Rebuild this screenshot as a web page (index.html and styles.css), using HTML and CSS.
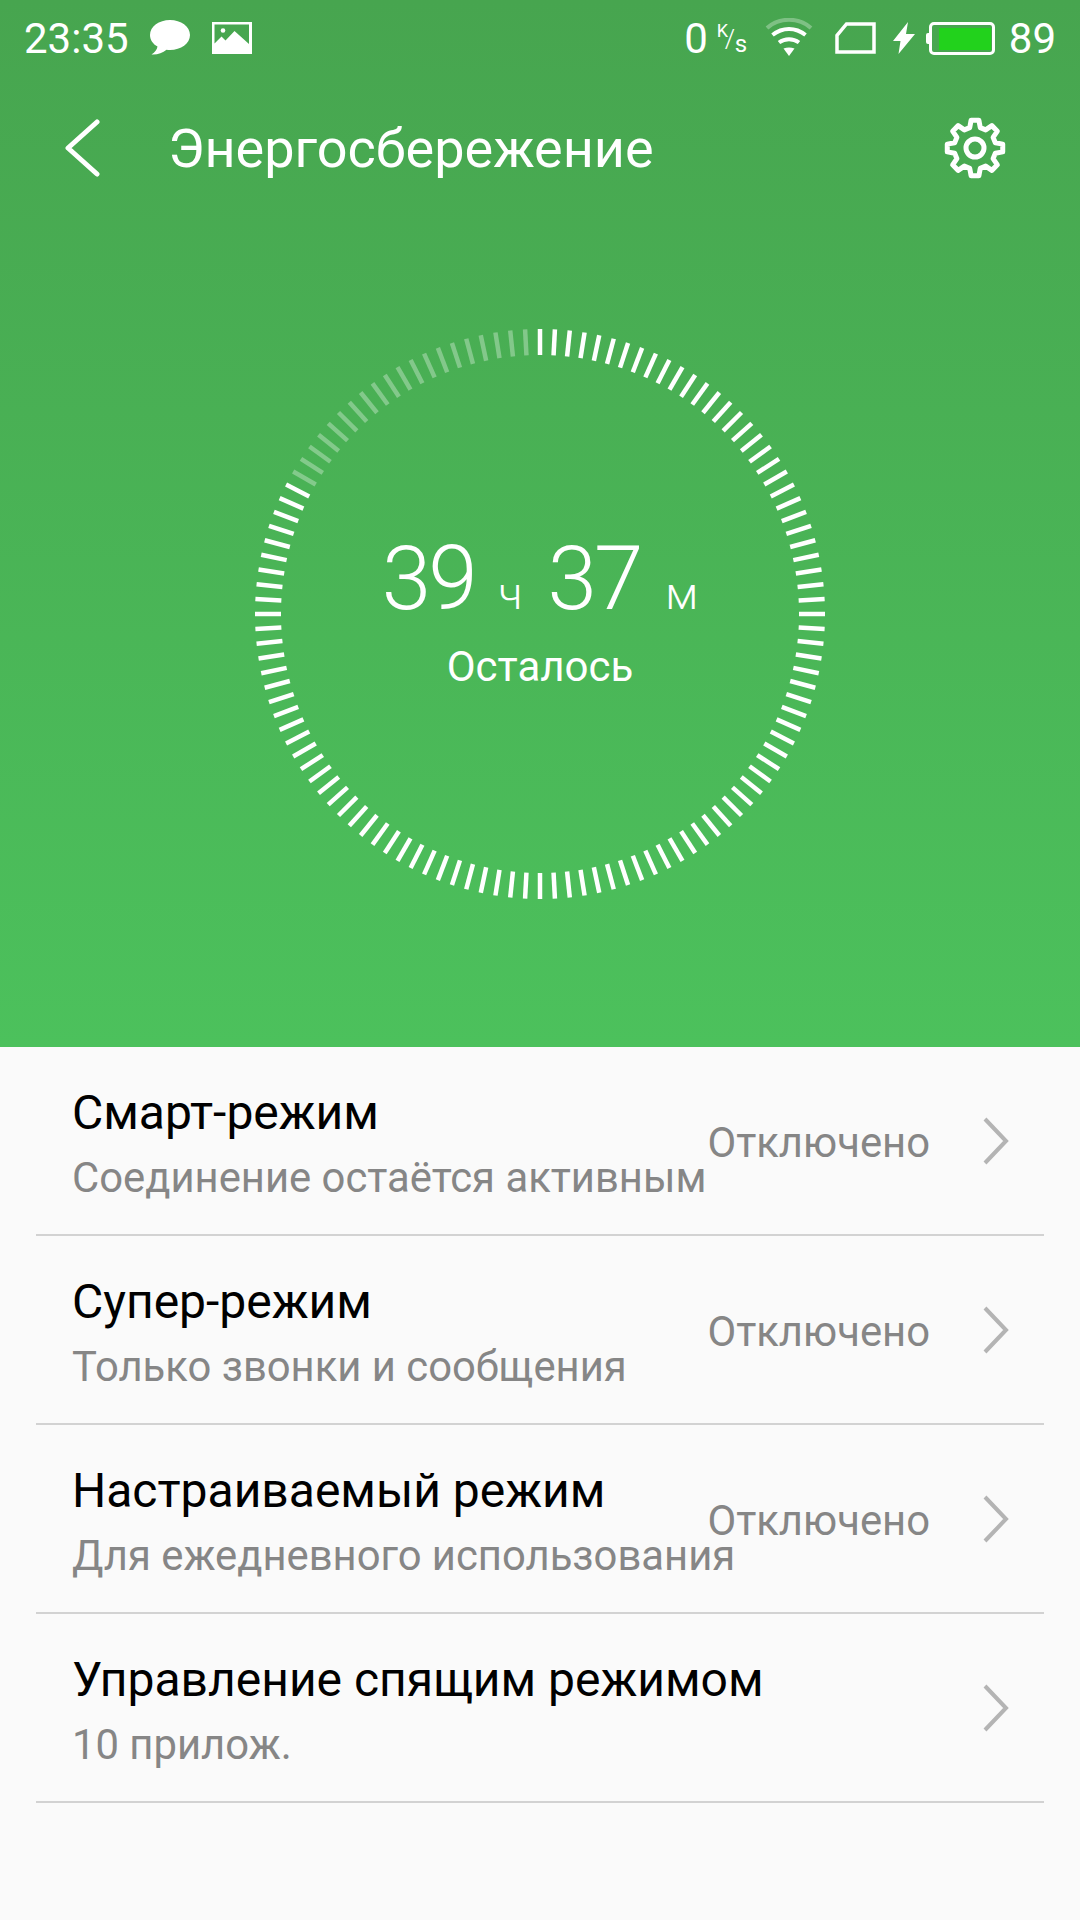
FILE: index.html
```html
<!DOCTYPE html>
<html lang="ru">
<head>
    <meta charset="UTF-8">
    <meta name="viewport" content="width=device-width, initial-scale=1.0">
    <title>Энергосбережение</title>
    <link rel="stylesheet" href="styles.css">
</head>
<body>

<div class="hero">
    <div class="status-bar">
        <span class="status-time">23:35</span>
        <svg class="icon-message" width="40" height="36" viewBox="0 0 40 36">
            <path fill="#fff" d="M20 0C9 0 0 6.500 0 15c0 5 3 9 7.500 11.600C7 29.500 5 32.500 1.500 34.500c5 .5 11-1 15-4.700 1 .1 2.400.2 3.500.2 11 0 20-6.500 20-15S31 0 20 0z"/>
        </svg>
        <svg class="icon-picture" width="40" height="32" viewBox="0 0 40 32">
            <path fill="#fff" fill-rule="evenodd" d="M0 0h40v32H0zM2.500 2.500v19l7-7 4 4 9-9.500 14.500 13V2.500z"/>
            <circle cx="11" cy="8.500" r="2.300" fill="#fff"/>
        </svg>

        <div class="status-right">
            <span class="status-speed">0</span>
            <span class="status-unit"><span class="unit-k">K</span><span class="unit-slash">/</span><span class="unit-s">s</span></span>
            <svg class="icon-wifi" width="48" height="40" viewBox="0 0 48 40">
                <path fill="none" stroke="#fff" stroke-opacity=".3" stroke-width="4" d="M2 10C14-1 34-1 46 10"/>
                <path fill="none" stroke="#fff" stroke-width="4" d="M7.500 17c10-8 23-8 33 0M14 24.500c6-4.500 14-4.500 20 0"/>
                <path fill="#fff" d="M18.500 30.500c3.500-1.500 7.500-1.500 11 0L24 38z"/>
            </svg>
            <svg class="icon-sim" width="41" height="32" viewBox="0 0 41 32">
                <path fill="none" stroke="#fff" stroke-width="3.500" d="M39 2v28H2V13.500L11.500 2z"/>
            </svg>
            <svg class="icon-bolt" width="23" height="32" viewBox="0 0 23 32">
                <path fill="#fff" d="M15 0L0 19h7.500L5.500 32 22 12h-9z"/>
            </svg>
            <div class="battery">
                <div class="battery-level"></div>
            </div>
            <span class="status-percent">89</span>
        </div>
    </div>

    <div class="toolbar">
        <svg class="icon-back" width="36" height="60" viewBox="0 0 36 60">
            <path fill="none" stroke="#fff" stroke-width="5" stroke-linecap="round" stroke-linejoin="round" d="M32 4L3 30l29 26"/>
        </svg>
        <span class="toolbar-title">Энергосбережение</span>
        <svg class="icon-gear" width="64" height="64" viewBox="-32 -32 64 64">
            <path fill="none" stroke="#fff" stroke-width="5" stroke-linejoin="round" d="M-5.260-20.330L-3.900-27.730 3.900-27.730 5.260-20.330 10.660-18.090 16.850-22.360 22.360-16.850 18.090-10.660 20.330-5.260 27.730-3.900 27.730 3.900 20.330 5.260 18.090 10.660 22.360 16.850 16.850 22.360 10.660 18.090 5.260 20.330 3.900 27.730-3.900 27.730-5.260 20.330-10.660 18.090-16.850 22.360-22.360 16.850-18.090 10.660-20.330 5.260-27.730 3.900-27.730-3.900-20.330-5.260-18.090-10.660-22.360-16.850-16.850-22.360-10.660-18.090z"/>
            <circle r="9" fill="none" stroke="#fff" stroke-width="5"/>
        </svg>
    </div>

    <div class="gauge">
        <svg id="gauge_ticks" width="580" height="580" viewBox="-290 -290 580 580"></svg>
        <div class="gauge-text">
            <div class="gauge-time">
                <span class="gauge-num">39</span><span class="gauge-unit unit-hours">ч</span><span class="gauge-num">37</span><span class="gauge-unit unit-mins">м</span>
            </div>
            <div class="gauge-label">Осталось</div>
        </div>
    </div>
</div>

<div class="list">
    <div class="row">
        <div class="row-text">
            <div class="row-title">Смарт-режим</div>
            <div class="row-sub">Соединение остаётся активным</div>
        </div>
        <span class="row-value">Отключено</span>
        <svg class="chevron" width="28" height="48" viewBox="0 0 28 48"><path d="M3 2l21 22L3 46"/></svg>
    </div>
    <div class="row">
        <div class="row-text">
            <div class="row-title">Супер-режим</div>
            <div class="row-sub">Только звонки и сообщения</div>
        </div>
        <span class="row-value">Отключено</span>
        <svg class="chevron" width="28" height="48" viewBox="0 0 28 48"><path d="M3 2l21 22L3 46"/></svg>
    </div>
    <div class="row">
        <div class="row-text">
            <div class="row-title">Настраиваемый режим</div>
            <div class="row-sub">Для ежедневного использования</div>
        </div>
        <span class="row-value">Отключено</span>
        <svg class="chevron" width="28" height="48" viewBox="0 0 28 48"><path d="M3 2l21 22L3 46"/></svg>
    </div>
    <div class="row">
        <div class="row-text">
            <div class="row-title">Управление спящим режимом</div>
            <div class="row-sub">10 прилож.</div>
        </div>
        <svg class="chevron" width="28" height="48" viewBox="0 0 28 48"><path d="M3 2l21 22L3 46"/></svg>
    </div>
</div>

<script>
    // 120 ticks round the dial, the 20 just before 12 o'clock are dimmed
    function drawTicks() {
        const svg = document.getElementById('gauge_ticks');
        for (let i = 0; i < 120; i++) {
            const line = document.createElementNS('http://www.w3.org/2000/svg', 'line');
            line.setAttribute('x1', 0);
            line.setAttribute('x2', 0);
            line.setAttribute('y1', -259);
            line.setAttribute('y2', -285);
            line.setAttribute('transform', 'rotate(' + (i * 3) + ')');
            line.setAttribute('class', i >= 100 ? 'tick tick-dim' : 'tick');
            svg.appendChild(line);
        }
    }

    drawTicks();
</script>

</body>
</html>
```
FILE: styles.css
```css
html, body {
    margin: 0;
    padding: 0;
}

body {
    width: 1080px;
    height: 1920px;
    overflow: hidden;
    background-color: #fafafa;
    font-family: Roboto, sans-serif;
}

svg {
    display: block;
    flex: none;
}

.hero {
    height: 1047px;
    background: linear-gradient(to bottom, #47a54f, #4cc15c);
    color: #fff;
}

/* status bar */
.status-bar {
    display: flex;
    align-items: center;
    height: 76px;
    padding: 0 24px 0 24px;
    font-size: 42px;
}

.icon-message {
    margin-left: 21px;
}

.icon-picture {
    margin-left: 22px;
}

.status-right {
    display: flex;
    align-items: center;
    margin-left: auto;
}

.status-unit {
    position: relative;
    width: 30px;
    height: 36px;
    margin-left: 9px;
    font-size: 20px;
}

.unit-k {
    position: absolute;
    left: 0;
    top: 0;
    font-size: 18px;
}

.unit-slash {
    position: absolute;
    left: 8px;
    top: 4px;
    font-size: 26px;
    font-weight: 300;
}

.unit-s {
    position: absolute;
    left: 18px;
    top: 10px;
    font-size: 24px;
}

.icon-wifi {
    margin-left: 18px;
}

.icon-sim {
    margin-left: 22px;
}

.icon-bolt {
    margin-left: 17px;
}

.battery {
    position: relative;
    box-sizing: border-box;
    width: 66px;
    height: 33px;
    margin-left: 13px;
    padding: 3px 1px 2px 7px;
    border: 3px solid #fff;
    border-radius: 5px;
}

/* contact nub on the left end */
.battery::before {
    content: "";
    position: absolute;
    left: -6px;
    top: 8px;
    width: 3px;
    height: 11px;
    border-radius: 2px 0 0 2px;
    background-color: #fff;
}

.battery-level {
    height: 100%;
    background-color: #22d21c;
}

.status-percent {
    margin-left: 14px;
}

/* toolbar */
.toolbar {
    display: flex;
    align-items: center;
    height: 144px;
    padding: 0 73px 0 65px;
}

.toolbar-title {
    margin-left: 67px;
    font-size: 54px;
}

.icon-gear {
    margin-left: auto;
}

/* dial */
.gauge {
    position: relative;
    width: 580px;
    height: 580px;
    margin: 104px auto 0;
}

.tick {
    stroke: #fff;
    stroke-width: 4.500;
}

.tick-dim {
    stroke-opacity: .32;
}

.gauge-text {
    position: absolute;
    left: 0;
    right: 0;
    top: 205px;
    text-align: center;
}

.gauge-time {
    display: flex;
    justify-content: center;
    align-items: baseline;
    line-height: 100px;
}

.gauge-num {
    font-size: 89px;
    font-weight: 300;
    letter-spacing: -3px;
}

.gauge-unit {
    font-size: 45px;
    font-weight: 300;
}

.unit-hours {
    margin: 0 25px 0 24px;
}

.unit-mins {
    margin-left: 25px;
}

.gauge-label {
    margin-top: -2px;
    font-size: 42px;
}

/* settings list */
.list {
    padding: 0 36px;
}

.row {
    display: flex;
    align-items: center;
    height: 187px;
    padding: 0 34px 0 36px;
    border-bottom: 2px solid #d2d2d2;
}

.row-text {
    flex: 1;
    width: 0;
    padding-top: 9px;
    white-space: nowrap;
}

.row-title {
    font-size: 48px;
    line-height: 64px;
    color: #000;
}

.row-sub {
    margin-top: 2px;
    font-size: 41.800px;
    line-height: 62px;
    color: #868686;
}

.row-value {
    margin-right: 52px;
    padding-top: 4px;
    font-size: 41.800px;
    color: #868686;
}

.chevron {
    fill: none;
    stroke: #b4b4b4;
    stroke-width: 4;
}
```
